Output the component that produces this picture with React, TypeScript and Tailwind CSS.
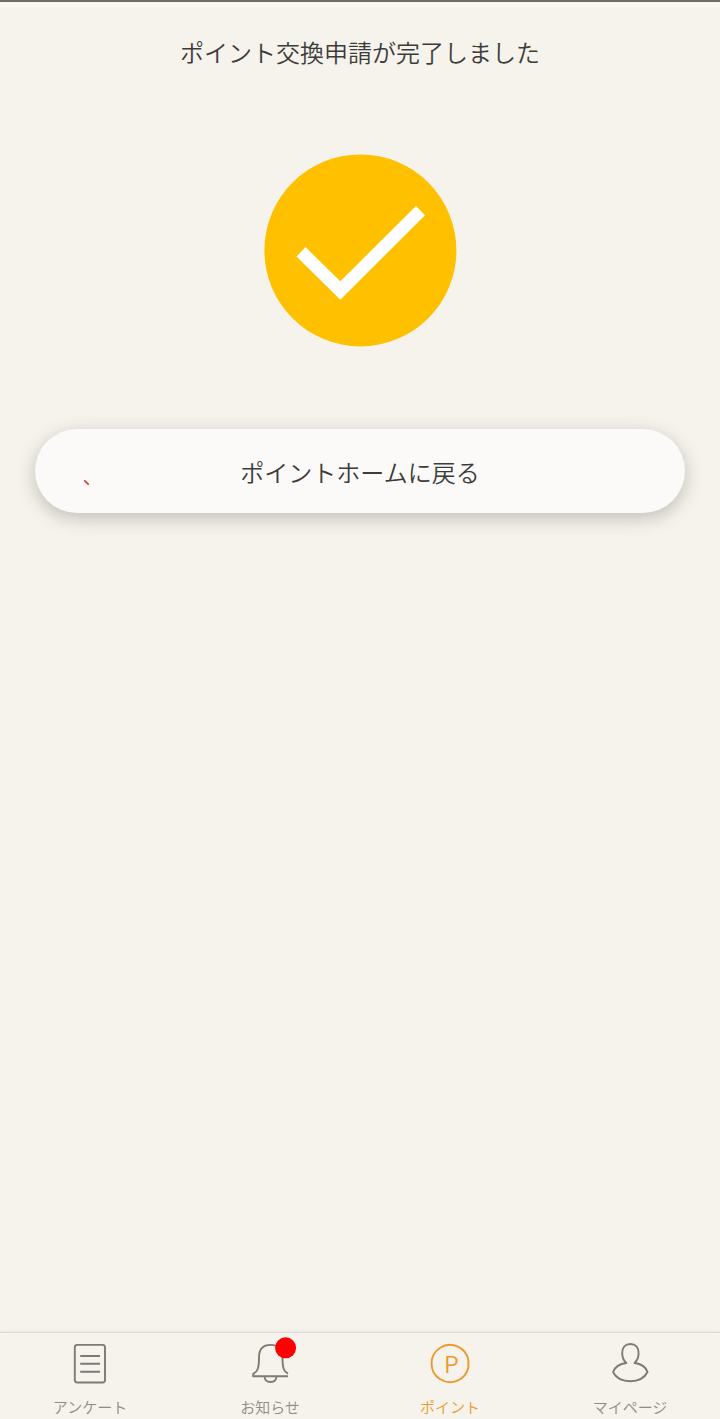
import type { ReactNode } from "react";

function NavIcon({ children }: { children: ReactNode }) {
  return (
    <svg
      viewBox="0 0 48 48"
      className="h-12 w-12 shrink-0 overflow-visible"
      fill="none"
      stroke="currentColor"
      strokeWidth="1.9"
      strokeLinejoin="round"
    >
      {children}
    </svg>
  );
}

function NavItem({ label, active, children }: { label: string; active?: boolean; children: ReactNode }) {
  return (
    <a className={`flex flex-1 flex-col items-center pt-[7px] ${active ? "text-[#eb9a2d]" : "text-[#7b7b77]"}`}>
      <NavIcon>{children}</NavIcon>
      <span className={`mt-2 text-[15px] leading-[22px] font-[350] whitespace-nowrap ${active ? "text-[#eb9a2d]" : "text-[#8c8c88]"}`}>
        {label}
      </span>
    </a>
  );
}

export default function App() {
  return (
    <div className="flex h-[1419px] w-[720px] flex-col overflow-hidden bg-[#f5f3ec] font-['Noto_Sans_CJK_JP',sans-serif] font-light text-[#3c3c3a]">
      <div className="h-[2px] shrink-0 bg-[#706b68]" />
      <div className="h-[5px] shrink-0 bg-[#faf7ee]" />
      <main className="flex flex-1 flex-col items-center px-[35px]">
        <h1 className="mt-[27px] text-2xl leading-9 font-[350] whitespace-nowrap">ポイント交換申請が完了しました</h1>
        <svg viewBox="0 0 192 192" className="mt-[84px] h-48 w-48 shrink-0 overflow-visible">
          <circle cx="96.4" cy="96.4" r="96" fill="#ffc000" />
          <path d="M32.5 102.5 41.5 93 76.3 127.3 152 52 161 61.3 76.3 145.7Z" fill="#fff" />
        </svg>
        <button className="relative mt-[83px] flex h-[84px] w-full shrink-0 items-center justify-center rounded-full bg-[#fbfaf8] pt-px text-2xl font-[350] shadow-[0_5px_18px_rgba(70,70,50,0.3)]">
          ポイントホームに戻る
          <svg viewBox="0 0 8 8" className="absolute top-[50px] left-[48px] h-2 w-2">
            <path d="M1.8 1.8 5.2 5.2" stroke="#cf4b40" strokeWidth="1.8" strokeLinecap="round" />
          </svg>
        </button>
      </main>
      <nav className="flex h-[87px] shrink-0 border-t border-[#dddcd8] shadow-[0_-1px_3px_rgba(0,0,0,0.05)]">
        <NavItem label="アンケート">
          <rect x="8.8" y="4.9" width="30.2" height="37.6" rx="2.5" />
          <path d="M14.2 16H34M14.2 23.7H34M14.2 31.7H34" />
        </NavItem>
        <NavItem label="お知らせ">
          <path d="M42 36.2H7.2V33.8C11.5 31.8 13 28.5 13 17.5C13 9 17.5 4.9 24.5 4.9S36.5 9 36.5 17.5C36.5 28.5 38 31.8 42 33.6" />
          <path d="M18.6 36.5C18.6 40 21 42 24.5 42S30.4 40 30.4 36.5" />
          <circle cx="39.6" cy="7.8" r="10.5" fill="#ff0000" stroke="none" />
        </NavItem>
        <NavItem label="ポイント" active>
          <path d="M42.4 20V27A18.6 18.6 0 1 1 42.4 20Z" />
          <text x="17.9" y="32.6" fontSize="23.5" fill="currentColor" stroke="none" className="font-['Noto_Sans_CJK_JP',sans-serif] font-[350]">
            P
          </text>
        </NavItem>
        <NavItem label="マイページ">
          <path d="M20.3 23C17.3 20.3 16.2 17.2 16.2 13.2C16.2 7.5 19.3 4 24.4 4S32.6 7.5 32.6 13.2C32.6 17.2 31.5 20.3 28.5 23C35.5 23.8 40 27.5 41.5 32C38.5 38 32 41.2 24.3 41.2S10.1 38 7 32C8.8 27.5 13.3 23.8 20.3 23Z" />
        </NavItem>
      </nav>
    </div>
  );
}
